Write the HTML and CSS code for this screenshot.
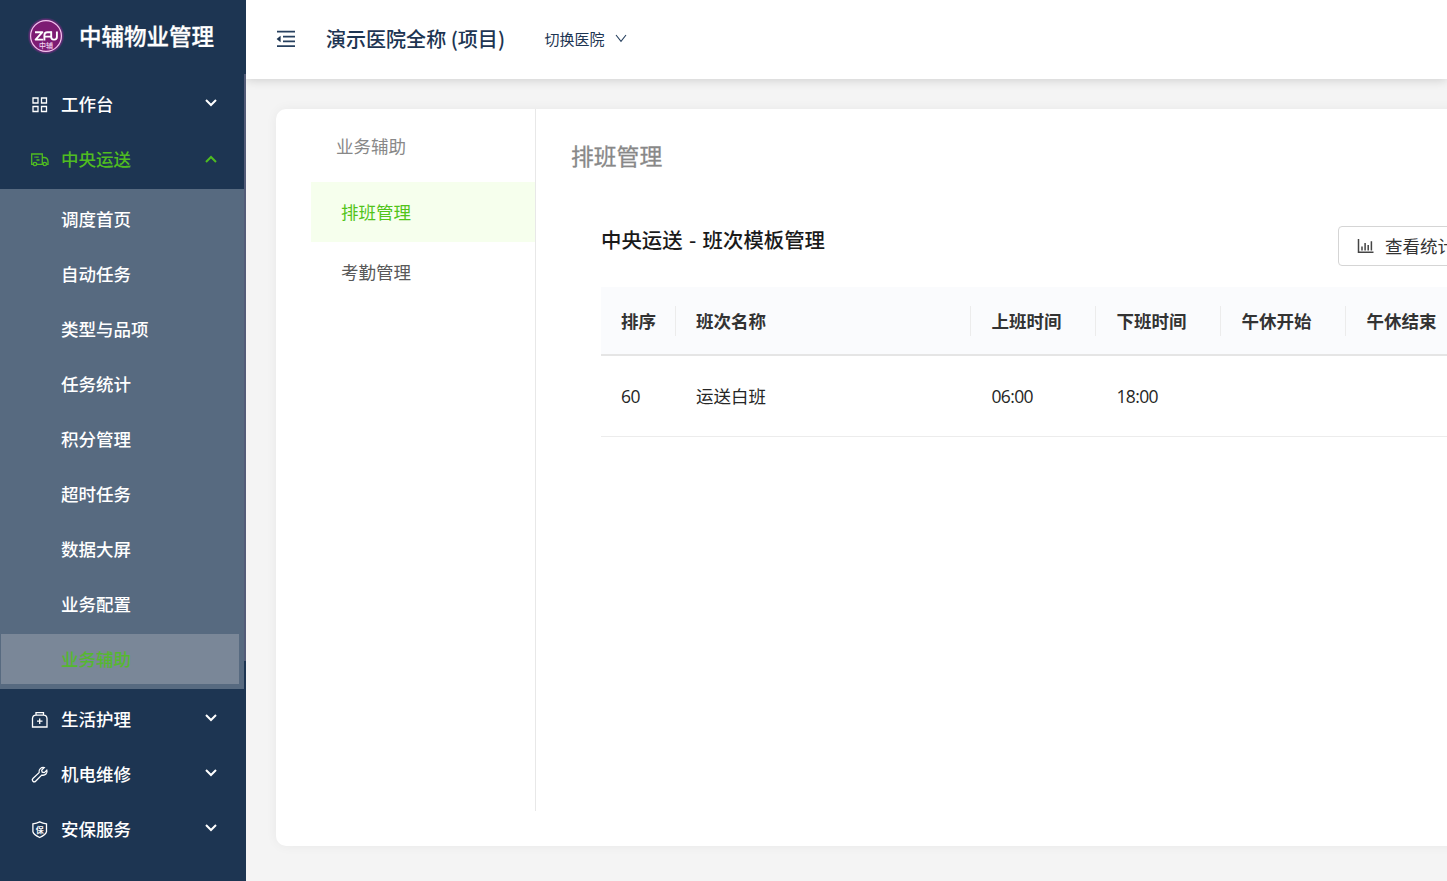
FILE: index.html
```html
<!DOCTYPE html>
<html lang="zh-CN">
<head>
<meta charset="utf-8">
<title>中辅物业管理</title>
<link rel="stylesheet" href="styles.css">
</head>
<body>
<div class="app">
  <aside class="sidebar">
    <div class="brand">
      <svg class="logo" width="40" height="40" viewBox="0 0 40 40">
        <defs><radialGradient id="glow"><stop offset=".8" stop-color="#d02bb0" stop-opacity=".75"/><stop offset="1" stop-color="#a0209a" stop-opacity="0"/></radialGradient></defs>
        <circle cx="20" cy="20" r="18.6" fill="url(#glow)"/>
        <circle cx="20" cy="20" r="15.4" fill="#7d1b73" stroke="#f3c6ee" stroke-width="1.2"/>
        <g fill="none" stroke="#fff" stroke-width="1.9" stroke-linejoin="round">
          <path d="M9 16.2h7.4L9.6 23.6h7.6"/><path d="M18.4 24.5v-5.2q0-3.1 3-3.1h4.400M18.400 20.600h6.600"/><path d="M25.200 15.400v5.700q0 2.500 2.500 2.500h.7q2.500 0 2.500-2.500v-5.700"/>
        </g>
        <text class="logo-text" x="20" y="31.5" text-anchor="middle">中辅</text>
      </svg>
      <span>中辅物业管理</span>
    </div>
    <nav class="menu">
      <a class="row">
        <svg class="ico" viewBox="0 0 19 19"><path d="M3 3h5v5H3zM11.500 3h5v5h-5zM3 11.500h5v5H3zM11.500 11.500h5v5h-5z"/></svg>
        <span>工作台</span>
        <svg class="arrow" viewBox="0 0 12 8"><path d="M1 1l5 5 5-5"/></svg>
      </a>
      <a class="row open">
        <svg class="ico" viewBox="0 0 19 19"><path d="M3 14.300H1.700V4h10.600v10.300H7M12.300 7.500h2q3.400 0 3.700 4v2.800h-1.300M8.700 7.200H5.200M4 7.200h.6M6.500 10h3"/><circle cx="5" cy="14" r="1.700"/><circle cx="14.800" cy="14" r="1.700"/></svg>
        <span>中央运送</span>
        <svg class="arrow up" viewBox="0 0 12 8"><path d="M1 7l5-5 5 5"/></svg>
      </a>
      <div class="submenu">
        <a>调度首页</a><a>自动任务</a><a>类型与品项</a><a>任务统计</a><a>积分管理</a><a>超时任务</a><a>数据大屏</a><a>业务配置</a><a class="current">业务辅助</a>
      </div>
      <a class="row">
        <svg class="ico" viewBox="0 0 19 19"><path d="M6 5.200V2.700h7.500v2.500M2.500 17V8.500q.3-3.300 3.300-3.300h7.900q3 0 3.300 3.300V17zM9.700 8.500v5.500M7 11.200h5.500"/></svg>
        <span>生活护理</span>
        <svg class="arrow" viewBox="0 0 12 8"><path d="M1 1l5 5 5-5"/></svg>
      </a>
      <a class="row">
        <svg class="ico" viewBox="0 0 19 19"><path d="M16.800 5.200L14.300 7.600l-2.100-.5-.5-2 2.500-2.500C11.500 1.900 8.300 4.400 9.100 7.600l-6.200 5.900a1.900 1.900 0 0 0 2.700 2.700l6.100-6.100c3.500.8 6.200-2 5.100-4.900z"/></svg>
        <span>机电维修</span>
        <svg class="arrow" viewBox="0 0 12 8"><path d="M1 1l5 5 5-5"/></svg>
      </a>
      <a class="row">
        <svg class="ico" viewBox="0 0 19 19"><path d="M9.700 1.800q3 1.500 6.800 2v8Q15.500 15 9.700 17.500 3.900 15 2.900 11.800v-8q3.800-.5 6.800-2z"/><text class="shield-text" x="9.700" y="12.700" text-anchor="middle">保</text></svg>
        <span>安保服务</span>
        <svg class="arrow" viewBox="0 0 12 8"><path d="M1 1l5 5 5-5"/></svg>
      </a>
    </nav>
    <i class="scrollbar"></i>
  </aside>
  <main class="main">
    <header class="topbar">
      <svg class="fold" width="20" height="18" viewBox="0 0 20 18"><path d="M1 1.700h18M7 6.600h12M7 11.400h12M1 16.200h18" stroke="#27405f" stroke-width="1.700"/><path d="M.6 9l4-3.200v6.400z" fill="#1d3552"/></svg>
      <h1>演示医院全称 (项目)</h1>
      <a class="switch">切换医院<svg width="12" height="9" viewBox="0 0 12 9"><path d="M1 1l5 6.300L11 1" fill="none" stroke="#27405f" stroke-width="1.100"/></svg></a>
    </header>
    <section class="card">
      <div class="side">
        <h2>业务辅助</h2>
        <a class="active">排班管理</a>
        <a>考勤管理</a>
      </div>
      <div class="content">
        <h2>排班管理</h2>
        <div class="toolbar">
          <h3>中央运送 - 班次模板管理</h3>
          <button class="stat"><svg width="17" height="16" viewBox="0 0 17 16"><path d="M1.500 1v13.300h15M5 12.500V8.500M8.100 12.500V5M11.200 12.500V7M14.400 12.500V3.300" fill="none" stroke="#444" stroke-width="1.500"/></svg><span>查看统计</span></button>
        </div>
        <div class="table">
          <div class="tr head"><span>排序</span><span>班次名称</span><span>上班时间</span><span>下班时间</span><span>午休开始</span><span>午休结束</span></div>
          <div class="tr"><span>60</span><span class="name">运送白班</span><span>06:00</span><span>18:00</span><span></span><span></span></div>
        </div>
      </div>
    </section>
  </main>
</div>
</body>
</html>
```
FILE: styles.css
```css
* { box-sizing: border-box; }
body { margin: 0; background: #f4f4f4; font-family: "Noto Sans CJK SC", "Noto Sans", sans-serif; font-size: 17.5px; overflow: hidden; }
h1, h2, h3 { margin: 0; font-weight: 400; }
.app { display: flex; width: 1447px; height: 881px; overflow: hidden; }

.sidebar { position: relative; flex: none; width: 246px; background: #1d3552; color: #fff; }
.brand { display: flex; align-items: center; gap: 13px; height: 74px; padding: 0 0 2px 26px; font-size: 22.5px; font-weight: 500; white-space: nowrap; }
.brand span { padding-bottom: 3px; -webkit-text-stroke: .3px #fff; }
.logo { flex: none; }
.logo-text { font-size: 7px; fill: #f3d5f0; }
.menu { width: 244px; padding-top: 5px; }
.row { display: flex; align-items: center; height: 50px; margin-bottom: 5px; padding: 0 27px 0 30px; font-weight: 500; }
.row span { flex: 1; padding: 0 0 2px 12px; }
.ico { width: 19px; height: 19px; fill: none; stroke: currentColor; stroke-width: 1.3; }
.shield-text { font-size: 8px; font-weight: 700; fill: currentColor; stroke: none; }
.arrow { width: 12px; height: 8px; margin-bottom: 3px; fill: none; stroke: currentColor; stroke-width: 2; }
.arrow.up { margin-bottom: 0; }
.open { color: #4fbc21; }
.submenu { height: 500px; padding: 5px 5px 0 1px; background: #576a80; margin-bottom: 5px; font-weight: 500; }
.submenu a { display: block; height: 50px; margin-bottom: 5px; padding-left: 60px; line-height: 50px; }
.submenu .current { background: #7a8798; color: #56b82f; }
.scrollbar { position: absolute; right: 0; top: 74px; width: 2px; height: 587px; background: #535c78; }

.main { flex: 1; min-width: 0; }
.topbar { display: flex; align-items: center; height: 79px; padding: 0 0 2px 30px; background: #fff; box-shadow: 0 1px 10px rgba(0, 0, 0, .16); color: #1d3552; }
.topbar h1 { margin-left: 30px; font-size: 20.05px; font-weight: 500; }
.switch { display: flex; align-items: center; gap: 10px; margin-left: 39.5px; font-size: 15px; }
.card { display: flex; width: 1300px; height: 737px; margin: 30px 0 0 30px; background: #fff; border-radius: 10px; box-shadow: 0 0 12px rgba(0, 0, 0, .05); }
.side { flex: none; width: 260px; height: 702px; padding-left: 35px; border-right: 1px solid #e8e8e8; color: #595959; }
.side h2 { height: 73px; padding-left: 25px; font-size: 17.5px; line-height: 74px; color: #888; }
.side a { display: block; height: 60px; padding-left: 30px; line-height: 60px; }
.side .active { background: #f6ffed; color: #52c41a; }
.content { flex: 1; padding: 23px 0 0 35px; }
.content h2 { height: 49px; font-size: 22.8px; line-height: 48px; color: #888; -webkit-text-stroke: .3px #888; }
.toolbar { display: flex; height: 106px; padding-left: 30px; color: #1a1a1a; }
.toolbar h3 { width: 737px; padding-top: 43px; font-size: 20.4px; line-height: 30px; font-weight: 500; word-spacing: 1.8px; }
.stat { display: flex; align-items: center; gap: 11px; width: 130px; height: 40px; margin-top: 45px; padding: 0 0 0 18px; background: #fff; border: 1px solid #d5d5d5; border-radius: 4px; font: inherit; color: #333; white-space: nowrap; }
.stat span { padding-bottom: 2px; }
.table { width: 950px; margin-left: 30px; color: #262626; }
.tr { display: grid; grid-template-columns: 75px 295.4px 125px 125px 125px 204.6px; align-items: center; height: 81px; border-bottom: 1px solid #ececec; font-family: "Open Sans", "Noto Sans CJK SC", sans-serif; letter-spacing: -.6px; }
.tr span { padding-left: 20px; font-size: 17.5px; }
.tr .name { padding-bottom: 2px; letter-spacing: 0; }
.tr.head { height: 69px; background: #fafbfd; border-bottom: 2px solid #e5e5e5; font-family: "Noto Sans CJK SC", sans-serif; font-weight: 700; letter-spacing: 0; color: #333; }
.head span { height: 30px; line-height: 30px; border-right: 1px solid #ececec; }
```
